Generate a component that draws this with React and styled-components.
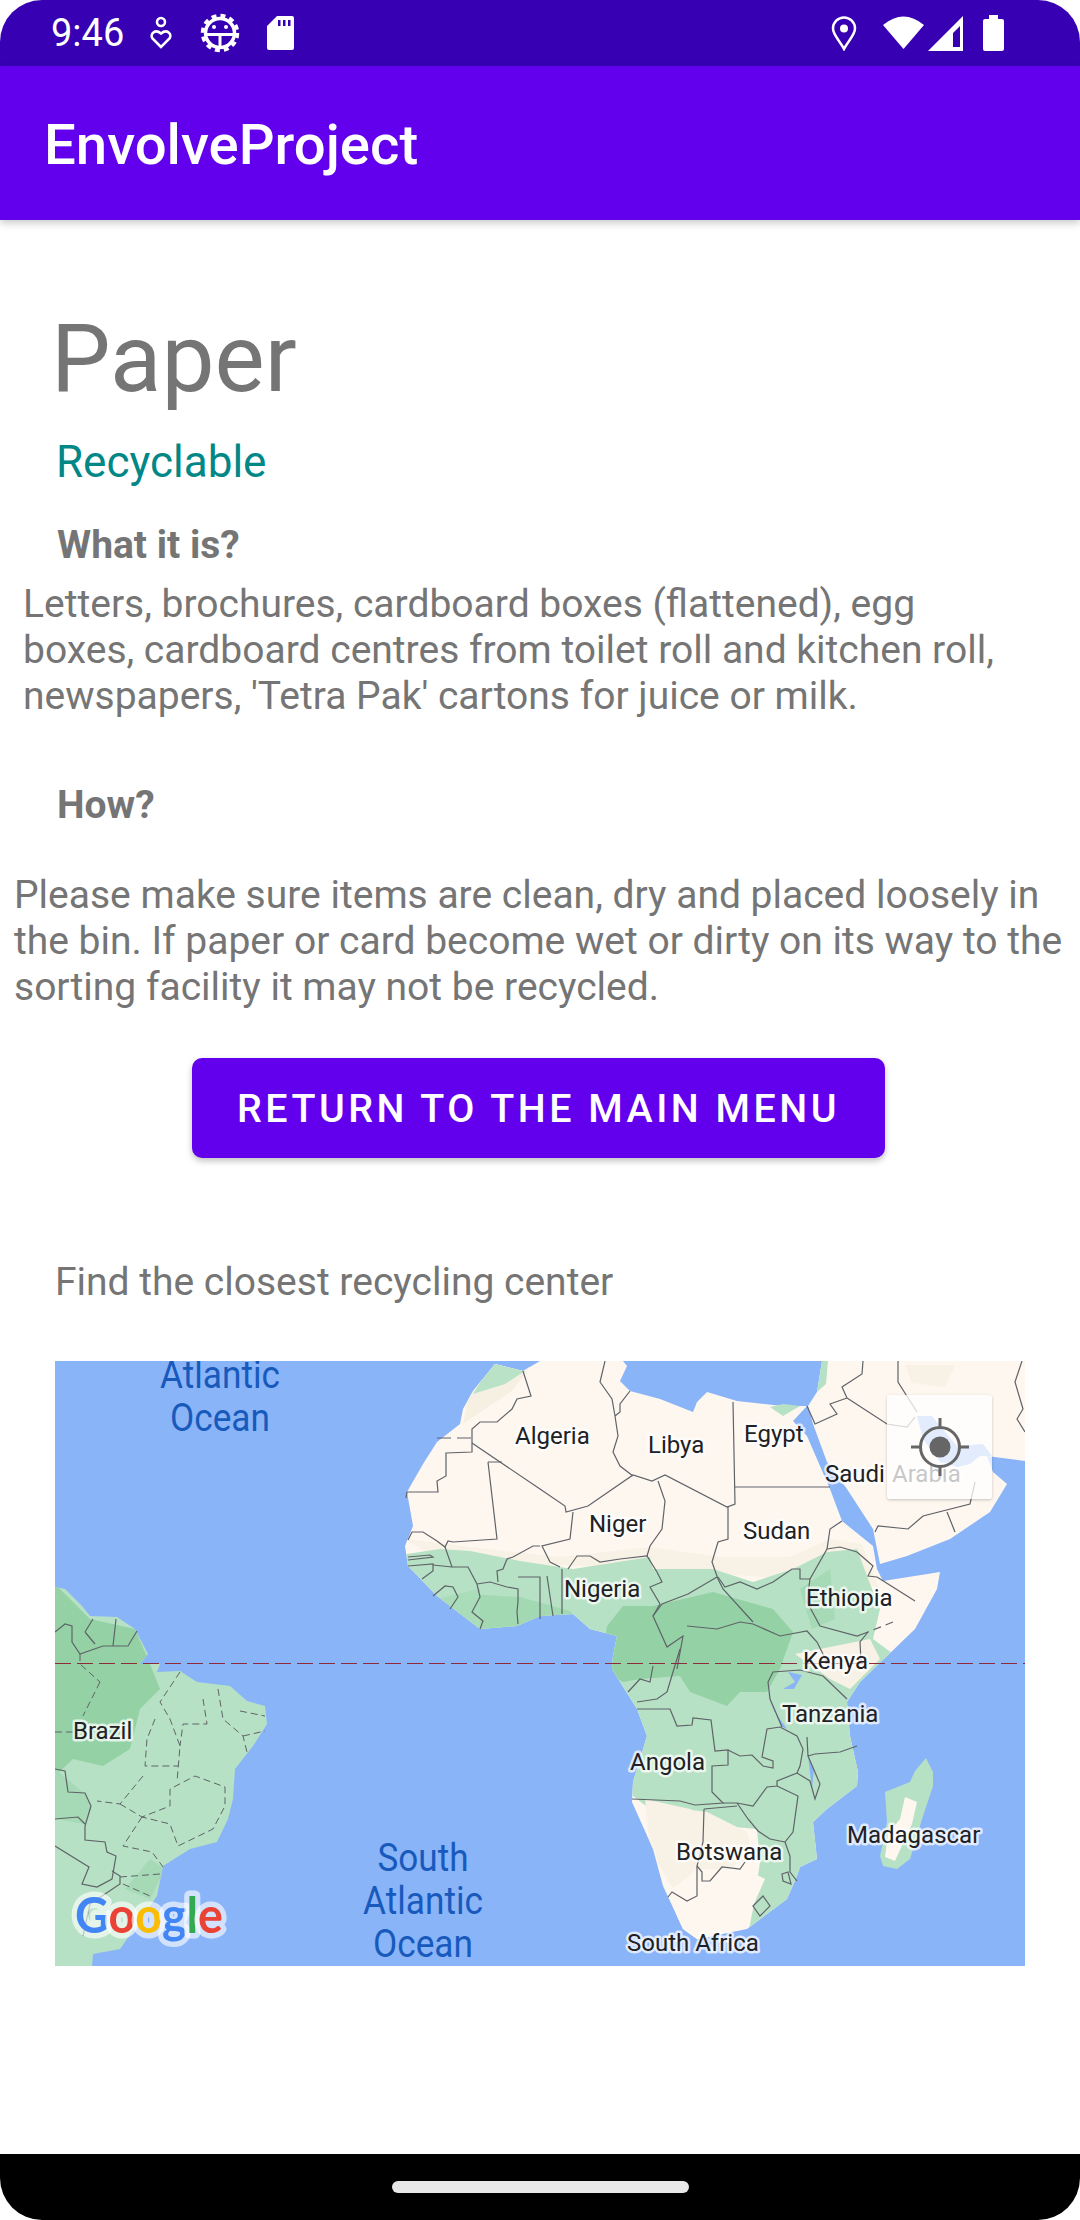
import styled, { createGlobalStyle } from "styled-components";

const GlobalStyle = createGlobalStyle`
  html, body {
    margin: 0;
    padding: 0;
    background: #fff;
  }
  * {
    box-sizing: border-box;
  }
`;

const Phone = styled.div`
  width: 1080px;
  height: 2220px;
  display: flex;
  flex-direction: column;
  border-radius: 42px;
  overflow: hidden;
  background: #fff;
  font-family: Roboto, "Liberation Sans", sans-serif;
`;

const StatusBar = styled.div`
  height: 66px;
  flex: none;
  display: flex;
  align-items: center;
  justify-content: space-between;
  padding: 0 76px 0 51px;
  background: #3700b3;
  color: #fff;
`;

const StatusGroup = styled.div`
  display: flex;
  align-items: center;
`;

const Clock = styled.span`
  font-size: 38px;
  line-height: 66px;
  width: 73px;
`;

const StatusIcon = styled.svg`
  display: block;
  flex: none;
  margin-left: ${(p) => p.$left || 0}px;
`;

const AppBar = styled.header`
  height: 154px;
  flex: none;
  display: flex;
  align-items: center;
  padding: 3px 44px 0;
  background: #6200ee;
  color: #fff;
  font-size: 56.3px;
  font-weight: 500;
  box-shadow: 0 3px 8px rgba(0, 0, 0, 0.22);
  position: relative;
`;

const Content = styled.main`
  flex: 1;
  display: flex;
  flex-direction: column;
  color: #757575;
`;

const Title = styled.h1`
  margin: 84px 0 0 51px;
  font-size: 94.5px;
  line-height: 110px;
  font-weight: 400;
`;

const Tag = styled.div`
  margin: 22px 0 0 56px;
  font-size: 44px;
  line-height: 52px;
  color: #018786;
`;

const Heading = styled.h2`
  margin: ${(p) => p.$top}px 0 0 57px;
  font-size: 39px;
  line-height: 43px;
  font-weight: 700;
`;

const Body = styled.p`
  margin: ${(p) => p.$top}px 0 0 ${(p) => p.$left}px;
  width: ${(p) => p.$width}px;
  font-size: 39px;
  line-height: 45.9px;
`;

const ReturnButton = styled.button`
  align-self: flex-start;
  width: 693px;
  height: 100px;
  margin: 48px 0 0 192px;
  padding: 0;
  border: none;
  border-radius: 10px;
  background: #6200ee;
  color: #fff;
  font-family: inherit;
  font-size: 39.4px;
  font-weight: 500;
  letter-spacing: 3.5px;
  box-shadow: 0 3px 6px rgba(0, 0, 0, 0.25);
`;

const MapFrame = styled.div`
  position: relative;
  width: 970px;
  height: 605px;
  margin: 55px 0 0 55px;
  overflow: hidden;
  background: #8ab4f8;
`;

const MapSvg = styled.svg`
  display: block;
`;

const Place = styled.text`
  font-family: Roboto, sans-serif;
  font-size: 24px;
  fill: #202124;
  stroke: rgba(255, 255, 255, 0.72);
  stroke-width: 5px;
  stroke-linejoin: round;
  paint-order: stroke;
`;

const Ocean = styled.text`
  font-family: Roboto, sans-serif;
  font-size: 38.5px;
  fill: #185abc;
  text-anchor: middle;
`;

const GoogleMark = styled.text`
  font-family: Lato, sans-serif;
  font-size: 50px;
  font-weight: 700;
  stroke: rgba(255, 255, 255, 0.62);
  stroke-width: 11px;
  stroke-linejoin: round;
  paint-order: stroke;
`;

const LocateButton = styled.div`
  position: absolute;
  left: 832px;
  top: 34px;
  width: 105px;
  height: 104px;
  display: flex;
  align-items: center;
  justify-content: center;
  border-radius: 3px;
  background: rgba(255, 255, 255, 0.75);
  box-shadow: 0 1px 3px rgba(0, 0, 0, 0.22);
`;

const NavBar = styled.div`
  height: 66px;
  flex: none;
  display: flex;
  align-items: center;
  justify-content: center;
  background: #000;
`;

const HomePill = styled.div`
  width: 297px;
  height: 12px;
  border-radius: 6px;
  background: #e8e8e8;
`;

const BORDERS = [
  "M523 1372L531 1397 517 1400 512 1410 497 1423 480 1423 472 1430 472 1453 446 1454 446 1477 437 1482 438 1493 407 1493 406 1499",
  "M472 1444L540 1490 565 1507 566 1513 588 1507 633 1476 652 1482 665 1476 727 1508 735 1505 733 1403",
  "M488 1463L502 1463M488 1463L497 1540 453 1543 448 1542 445 1548 437 1542 423 1533 412 1533 408 1541",
  "M573 1513L570 1540 542 1547 550 1563 560 1568M540 1547L533 1547 513 1558 507 1560 503 1570 497 1572 498 1583",
  "M568 1570L577 1557 590 1557 600 1563 620 1560 647 1557 657 1573 662 1583 650 1588 660 1605 653 1617 667 1648 683 1637 677 1670",
  "M647 1557L650 1547 662 1530 665 1502 658 1482",
  "M633 1477L620 1467 613 1453 618 1437 615 1417 612 1400 600 1383 605 1362M615 1417L620 1413 620 1405 630 1392",
  "M728 1507L728 1540 718 1543 712 1563 718 1580 723 1590 753 1623",
  "M735 1488L830 1488M842 1522L830 1530 827 1550 810 1580 807 1603 820 1627 857 1637 868 1633",
  "M718 1578L725 1588 740 1583 757 1590 773 1583 792 1570 800 1570 800 1580 810 1580",
  "M687 1627L717 1630 740 1623 753 1625 780 1637 807 1632 817 1643 828 1665M653 1617L662 1605 688 1595 717 1578",
  "M877 1578L915 1602M868 1633L860 1643 861 1662M827 1550L840 1548 857 1553 873 1567 868 1577 877 1578",
  "M875 1533L878 1527 908 1530 923 1517 970 1505 975 1483M947 1513L955 1533",
  "M847 1399L887 1425 907 1428 915 1418M847 1399L830 1405 837 1415 815 1425 807 1407M847 1399L842 1388 862 1375 863 1362M898 1362L898 1383 917 1413",
  "M1022 1362L1015 1383 1023 1410 1017 1420 1025 1433",
  "M408 1561L433 1558 430 1556 408 1558M408 1567L433 1565 433 1572 422 1580",
  "M445 1548L452 1568 468 1568 477 1585 480 1598 472 1613 483 1622 480 1630M477 1585L490 1583 507 1588 518 1590 518 1602 517 1613 518 1625M518 1578L540 1578 540 1620",
  "M433 1597L445 1587 453 1588 458 1598 450 1610M433 1566L452 1568M547 1577L553 1617M562 1570L562 1615",
  "M55 1633L65 1625 72 1627 72 1643 80 1655 103 1647 128 1647 137 1632M113 1647L116 1620M85 1633L93 1620M85 1633L95 1645",
  "M55 1770L65 1772 68 1793 85 1794 91 1807 85 1827 85 1841 105 1843 107 1853 116 1857 112 1880 97 1888 82 1885 89 1868 55 1847",
  "M55 1820L78 1818 85 1825M112 1872L120 1877 120 1885 90 1905 83 1937",
  "M628 1693L640 1680 650 1683 653 1667M637 1703L657 1700 667 1693 673 1673 680 1650",
  "M637 1710L670 1710 677 1727 692 1726 693 1719 711 1721 715 1752 728 1751 728 1766 712 1767 712 1793 723 1804 695 1806 680 1802 632 1800",
  "M728 1751L740 1757 752 1756 763 1767 773 1769 773 1762 762 1758 767 1730 780 1728 797 1737 803 1750 800 1767 797 1774 777 1782 777 1787 767 1788 753 1807 737 1804 723 1804",
  "M782 1728L770 1700 768 1683 773 1673 800 1671 823 1677 847 1700M807 1738L808 1757 815 1755 840 1753 857 1747M808 1757L820 1785 815 1800 810 1782 797 1774",
  "M777 1787L798 1797 793 1833 785 1843 790 1857 790 1873 797 1882M782 1875L788 1873 791 1885 783 1882Z",
  "M753 1907L763 1897 770 1907 760 1917Z",
  "M737 1804L748 1820 758 1832 770 1840 785 1843M704 1810L737 1807M704 1810L703 1843 697 1867 697 1897 687 1902 672 1893 668 1898",
  "M697 1867L702 1873 702 1882 710 1882 722 1868 740 1870 745 1863",
];

const STATE_LINES = [
  "M100 1683L83 1717M55 1733L73 1733M180 1673L160 1703 170 1720 180 1747 177 1783",
  "M155 1720L147 1740 145 1767 178 1767M143 1777L120 1805 97 1802",
  "M120 1805L142 1818 170 1807 170 1790 195 1777 225 1788 225 1807 213 1830 178 1847 170 1825 142 1818",
  "M142 1818L123 1847 152 1853 163 1868M120 1878L160 1875M123 1885L150 1897",
  "M203 1700L207 1725 183 1725 180 1747M218 1690L223 1720 243 1737 247 1753M240 1712L265 1717M243 1737L265 1732",
  "M80 1655L80 1665 100 1683",
];

const PLACES = [
  ["Algeria", 515, 1445],
  ["Libya", 648, 1454],
  ["Egypt", 744, 1443],
  ["Saudi", 825, 1483],
  ["Arabia", 892, 1483],
  ["Niger", 589, 1533],
  ["Sudan", 743, 1540],
  ["Nigeria", 564, 1598],
  ["Ethiopia", 806, 1607],
  ["Kenya", 803, 1670],
  ["Brazil", 73, 1740],
  ["Tanzania", 782, 1723],
  ["Angola", 630, 1771],
  ["Botswana", 676, 1861],
  ["Madagascar", 847, 1844],
  ["South Africa", 627, 1952],
];

const OCEANS = [
  ["Atlantic", 220, 1389, 120],
  ["Ocean", 220, 1432, 100],
  ["South", 423, 1872, 91],
  ["Atlantic", 423, 1915, 120],
  ["Ocean", 423, 1958, 100],
];

const WorldMap = () => (
  <MapFrame>
    <MapSvg width="970" height="605" viewBox="55 1362 970 605">
      <defs>
        <clipPath id="africa">
          <path d="M495 1365L523 1372 540 1362 623 1362 627 1367 620 1382 630 1392 660 1400 693 1413 697 1403 707 1393 737 1402 783 1407 807 1407 793 1422 807 1437 830 1490 842 1522 873 1547 877 1570 883 1582 940 1573 937 1590 915 1630 887 1657 860 1683 847 1703 850 1737 858 1773 857 1787 827 1810 813 1823 817 1860 800 1868 797 1877 787 1900 747 1930 697 1940 683 1930 663 1887 653 1850 632 1803 633 1783 647 1737 637 1710 612 1670 613 1657 617 1637 590 1630 573 1615 540 1617 517 1627 480 1630 437 1597 408 1567 405 1547 413 1527 407 1493 423 1465 437 1443 460 1425 463 1410 473 1392Z" />
        </clipPath>
        <clipPath id="brazil">
          <path d="M55 1588L65 1590 82 1607 90 1617 117 1618 135 1630 148 1655 140 1665 160 1665 157 1673 180 1672 197 1683 230 1687 247 1702 265 1707 267 1725 253 1747 235 1770 233 1800 228 1820 217 1843 190 1850 163 1867 157 1897 120 1950 93 1955 92 1967 55 1967Z" />
        </clipPath>
      </defs>

      {/* land */}
      <g clipPath="url(#africa)">
        <rect x="400" y="1362" width="560" height="600" fill="#fef7f0" />
        <path d="M495 1360L530 1368 512 1392 463 1425 470 1390Z" fill="#f6f0e2" />
        <path d="M495 1360L525 1372 505 1385 473 1395Z" fill="#b9e2c6" />
        <path d="M405 1540L470 1548 560 1558 650 1548 720 1558 790 1558 830 1540 862 1545 880 1590 830 1570 790 1580 650 1570 440 1562Z" fill="#f8f2e6" />
        <path d="M400 1556L440 1550 470 1552 520 1562 573 1570 650 1558 653 1570 713 1570 753 1583 793 1570 827 1553 857 1550 867 1577 880 1610 873 1640 900 1660 900 1960 747 1940 753 1910 760 1863 757 1830 723 1827 690 1810 667 1823 633 1797 600 1700 400 1620Z" fill="#b7e1c4" />
        <path d="M653 1607L713 1593 773 1610 793 1633 780 1670 767 1693 740 1693 727 1707 690 1693 680 1677 640 1680 623 1683 600 1670 607 1627 623 1607Z" fill="#94d2a6" />
        <path d="M470 1595L520 1598 570 1612 590 1640 480 1640Z" fill="#a2d8b2" />
        <path d="M437 1600L480 1590 480 1635Z" fill="#a9dcb8" />
        <path d="M800 1590L830 1570 835 1620 812 1630Z" fill="#a6d9b5" />
        <path d="M653 1837L683 1810 707 1813 747 1833 753 1857 727 1870 697 1870 673 1890 657 1863Z" fill="#f8f2e6" />
        <path d="M645 1800L690 1810 670 1850 650 1850Z" fill="#f8f2e6" />
        <path d="M670 1890L700 1875 745 1870 765 1880 745 1925 700 1945 680 1930Z" fill="#fef7f0" />
        <path d="M795 1655L870 1640 880 1660 850 1690 830 1680Z" fill="#f8f2e6" />
      </g>

      <path d="M822 1362L817 1393 808 1407 813 1425 827 1463 847 1490 873 1530 880 1565 907 1557 950 1540 990 1513 1007 1485 993 1473 987 1457 1025 1462 1025 1362Z" fill="#fef7f0" />
      <path d="M917 1417L932 1417 957 1447 983 1445 992 1457 980 1457 970 1465 957 1468 940 1463 923 1440Z" fill="#8ab4f8" />
      <path d="M822 1362L828 1362 826 1385 817 1393Z" fill="#b7e1c4" />
      <path d="M905 1366L955 1366 945 1388 912 1384Z" fill="#f8f2e6" />
      <path d="M770 1408L783 1405 800 1407 783 1417Z" fill="#b7e1c4" />

      <g clipPath="url(#brazil)">
        <rect x="55" y="1580" width="220" height="390" fill="#b7e1c4" />
        <path d="M55 1585L90 1620 135 1630 150 1665 160 1690 140 1710 130 1750 103 1767 73 1760 55 1777Z" fill="#94d2a6" />
        <path d="M55 1770L85 1795 91 1810 85 1825 55 1820Z" fill="#a6d9b5" />
        <path d="M150 1860L165 1870 150 1900 125 1890Z" fill="#a6d9b5" />
      </g>

      <path d="M926 1759L933 1773 933 1787 923 1817 910 1860 897 1870 883 1867 880 1857 887 1823 885 1793 910 1783 915 1772Z" fill="#b7e1c4" />
      <path d="M905 1798L917 1803 912 1825 905 1840 895 1862 885 1858 888 1835 900 1820Z" fill="#fef7f0" />

      <path d="M783 1690L795 1683 788 1673 802 1676 794 1690Z" fill="#8ab4f8" />
      <path d="M770 1702L782 1728 787 1730 774 1712Z" fill="#8ab4f8" />
      <path d="M808 1757L812 1790 814 1770Z" fill="#8ab4f8" />

      <g fill="none" stroke="#5f6368" strokeWidth="1.2">
        {BORDERS.map((d) => (
          <path key={d} d={d} />
        ))}
        <path d="M437 1439L472 1439" strokeDasharray="14 6" />
        <path d="M893 1623L868 1633" strokeDasharray="8 5" />
        {STATE_LINES.map((d) => (
          <path key={d} d={d} strokeDasharray="7 4" strokeWidth="1" />
        ))}
      </g>

      <path d="M55 1664.5H1025" stroke="#8f2a3a" strokeWidth="1" strokeDasharray="16 6" />

      {PLACES.map(([name, x, y]) => (
        <Place key={name} x={x} y={y}>
          {name}
        </Place>
      ))}

      {OCEANS.map(([name, x, y, w]) => (
        <Ocean key={`${name}${x}`} x={x} y={y} textLength={w} lengthAdjust="spacingAndGlyphs">
          {name}
        </Ocean>
      ))}

      <GoogleMark x="75" y="1934" textLength="148" lengthAdjust="spacingAndGlyphs">
        <tspan fill="#4285f4">G</tspan>
        <tspan fill="#ea4335">o</tspan>
        <tspan fill="#fbbc05">o</tspan>
        <tspan fill="#4285f4">g</tspan>
        <tspan fill="#34a853">l</tspan>
        <tspan fill="#ea4335">e</tspan>
      </GoogleMark>
    </MapSvg>
    <LocateButton>
      <svg width="60" height="60" viewBox="0 0 60 60">
        <circle cx="30" cy="30" r="19.5" fill="none" stroke="#666" strokeWidth="3" />
        <circle cx="30" cy="30" r="10.5" fill="#666" />
        <path d="M30 1V10M30 50V59M1 30H10M50 30H59" stroke="#666" strokeWidth="3" />
      </svg>
    </LocateButton>
  </MapFrame>
);

const App = () => (
  <>
    <GlobalStyle />
    <Phone>
      <StatusBar>
        <StatusGroup>
          <Clock>9:46</Clock>
          <StatusIcon $left={26} width="22" height="34" viewBox="0 0 22 34">
            <g fill="none" stroke="#fff" strokeWidth="2.6">
              <circle cx="11" cy="6" r="4" />
              <path d="M11 31L2.5 22.5C-0.5 18 5 12.5 11 17.5 17 12.5 22.5 18 19.5 22.5Z" />
            </g>
          </StatusIcon>
          <StatusIcon $left={28} width="40" height="40" viewBox="0 0 40 40">
            <circle cx="20" cy="20" r="14.5" fill="none" stroke="#fff" strokeWidth="3.5" />
            <circle cx="20" cy="20" r="17.5" fill="none" stroke="#fff" strokeWidth="3.5" strokeDasharray="5 4.16" />
            <circle cx="14" cy="14" r="2" fill="#fff" />
            <circle cx="26" cy="14" r="2" fill="#fff" />
            <path d="M6 21.5H34M20 21.5V35" stroke="#fff" strokeWidth="3" />
          </StatusIcon>
          <StatusIcon $left={27} width="27" height="34" viewBox="0 0 27 34">
            <path
              fillRule="evenodd"
              fill="#fff"
              d="M10 0H25Q27 0 27 2V32Q27 34 25 34H2Q0 34 0 32V10ZM11 4V10H13.5V4ZM16 4V10H18.5V4ZM21 4V10H23.5V4Z"
            />
          </StatusIcon>
        </StatusGroup>
        <StatusGroup>
          <StatusIcon width="26" height="35" viewBox="0 0 26 35">
            <path
              d="M13 33C9 25 2 19 2 12.5A11 11 0 0 1 24 12.5C24 19 17 25 13 33Z"
              fill="none"
              stroke="#fff"
              strokeWidth="2.5"
            />
            <circle cx="13" cy="12.5" r="4" fill="#fff" />
          </StatusIcon>
          <StatusIcon $left={26} width="41" height="34" viewBox="0 0 41 34">
            <path d="M20.5 33L0 9Q20.5 -8 41 9Z" fill="#fff" />
          </StatusIcon>
          <StatusIcon $left={4} width="35" height="35" viewBox="0 0 35 35">
            <path fillRule="evenodd" fill="#fff" d="M35 0V35H0ZM32 10L25 17V31H32Z" />
          </StatusIcon>
          <StatusIcon $left={20} width="21" height="36" viewBox="0 0 21 36">
            <path fill="#fff" d="M6 0H15V4H19Q21 4 21 6V34Q21 36 19 36H2Q0 36 0 34V6Q0 4 2 4H6Z" />
          </StatusIcon>
        </StatusGroup>
      </StatusBar>

      <AppBar>EnvolveProject</AppBar>

      <Content>
        <Title>Paper</Title>
        <Tag>Recyclable</Tag>
        <Heading $top={36}>What it is?</Heading>
        <Body $top={15} $left={23} $width={1010}>
          Letters, brochures, cardboard boxes (flattened), egg boxes, cardboard centres from toilet
          roll and kitchen roll, newspapers, 'Tetra Pak' cartons for juice or milk.
        </Body>
        <Heading $top={64}>How?</Heading>
        <Body $top={46} $left={14} $width={1060}>
          Please make sure items are clean, dry and placed loosely in the bin. If paper or card
          become wet or dirty on its way to the sorting facility it may not be recycled.
        </Body>
        <ReturnButton>RETURN TO THE MAIN MENU</ReturnButton>
        <Body $top={102} $left={55} $width={900}>
          Find the closest recycling center
        </Body>
        <WorldMap />
      </Content>

      <NavBar>
        <HomePill />
      </NavBar>
    </Phone>
  </>
);

export default App;
